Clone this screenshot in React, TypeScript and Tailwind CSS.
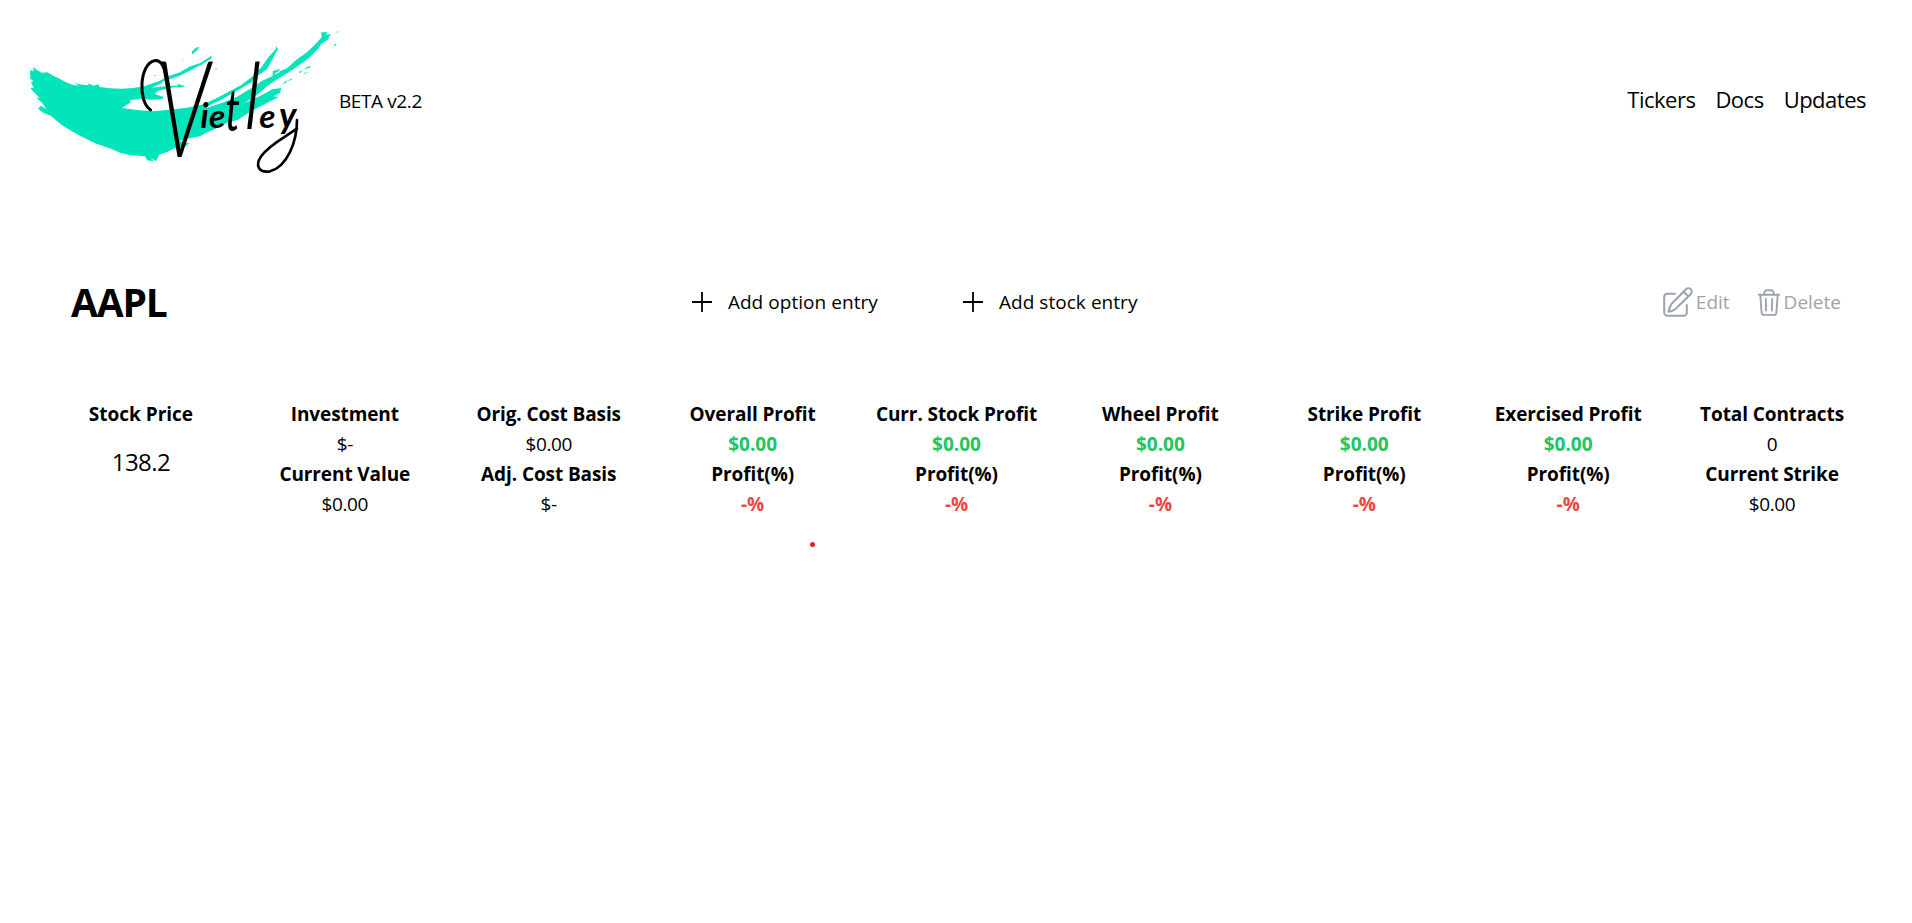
import React from "react";

type Tone = "label" | "value" | "gain" | "loss";
type Line = { text: string; tone: Tone };

const toneClass: Record<Tone, string> = {
  label: "font-bold text-black tracking-[-0.1px]",
  value: "font-normal text-black tracking-[-0.4px]",
  gain: "font-bold text-[#22c55e]",
  loss: "font-bold text-[#ef4444]",
};

const profit = (title: string): Line[] => [
  { text: title, tone: "label" },
  { text: "$0.00", tone: "gain" },
  { text: "Profit(%)", tone: "label" },
  { text: "-%", tone: "loss" },
];

const columns: Line[][] = [
  [
    { text: "Investment", tone: "label" },
    { text: "$-", tone: "value" },
    { text: "Current Value", tone: "label" },
    { text: "$0.00", tone: "value" },
  ],
  [
    { text: "Orig. Cost Basis", tone: "label" },
    { text: "$0.00", tone: "value" },
    { text: "Adj. Cost Basis", tone: "label" },
    { text: "$-", tone: "value" },
  ],
  profit("Overall Profit"),
  profit("Curr. Stock Profit"),
  profit("Wheel Profit"),
  profit("Strike Profit"),
  profit("Exercised Profit"),
  [
    { text: "Total Contracts", tone: "label" },
    { text: "0", tone: "value" },
    { text: "Current Strike", tone: "label" },
    { text: "$0.00", tone: "value" },
  ],
];

function Logo() {
  return (
    <svg className="h-40 w-[319px] shrink-0 overflow-visible" viewBox="0 0 957 480" role="img" aria-label="Vietley">
      <g fill="#02e5bb">
        <path d="M30 150 L42 154 L38 141 L64 158 L82 157 L101 168 L116 175 L132 184 L157 194 L177 197 L163 189 L187 194 L207 196 L202 189 L222 197 L234 193 L240 201 L270 205 L305 206 L340 204 L375 198 L398 190 L430 181 L425 190 L395 203 L447 197 L474 197 L470 191 L495 198 L486 202 L459 202 L440 207 L415 212 L404 221 L430 231 L428 237 L395 239 L359 236 L329 241 L334 246 L306 264 L345 269 L395 274 L450 269 L500 263 L546 254 L585 237 L630 213 L665 194 L700 167 L724 142 L745 112 L767 88 L768 78 L774 88 L757 118 L741 148 L715 166 L702 182 L650 213 L603 240 L565 257 L560 264 L605 249 L650 231 L700 201 L724 184 L758 168 L758 154 L781 146 L774 156 L802 144 L827 121 L859 98 L883 76 L905 52 L904 37 L923 37 L917 44 L932 42 L923 59 L904 72 L893 88 L868 113 L834 138 L803 159 L769 179 L742 198 L713 223 L672 250 L720 228 L757 208 L784 204 L780 219 L760 229 L776 231 L742 248 L707 266 L674 286 L655 299 L620 309 L587 326 L555 340 L540 349 L508 355 L479 363 L492 368 L510 370 L490 382 L463 385 L441 396 L418 404 L408 423 L391 414 L402 424 L381 421 L375 409 L329 405 L302 399 L269 385 L225 370 L174 344 L126 316 L92 287 L71 279 L54 266 L62 257 L78 267 L70 253 L48 232 L60 235 L40 215 L31 203 L42 205 L33 187 L40 182 L31 177 Z" />
        <path d="M405 190 L448 167 L477 158 L511 139 L541 129 L577 106 L573 116 L544 134 L512 151 L478 168 L443 180Z" />
        <path d="M515 96 L526 84 L539 80 L532 90 L517 103Z" />
        <path d="M487 121l5 1-4 2zM402 164l6 2-4 3zM586 145l6 1-5 4zM951 33l4 3-5 3zM940 75l10-5-4 8z" />
        <path d="M787 192l16-13-6 11zM801 184l17-11-5 7zM835 156l13-5-7 8zM854 145l18-8-2 6-14 4zM851 160l15-5-12 7z" />
      </g>
      <path d="M763 162l12-8 6 1-13 8z" fill="#fff" />
      <g fill="none" stroke="#000" strokeLinecap="round">
        <path d="M392 270C352 245 359 130 403 122C421 119 432 136 438 165" strokeWidth="9" />
        <path d="M831 300C831 365 802 440 750 454C716 460 704 436 724 408C752 370 800 350 831 325" strokeWidth="8" />
      </g>
      <g fill="#000" fontFamily="Lato, 'Open Sans', sans-serif" fontStyle="italic">
        <text transform="translate(408 412) scale(.66 1)" fontSize="402" fontWeight="300">V</text>
        <text transform="translate(541 324)" fontSize="104" fontWeight="700">i</text>
        <text transform="translate(567 323)" fontSize="100" fontWeight="700">e</text>
        <text transform="translate(616 332) scale(.72 1)" fontSize="172" fontWeight="400">t</text>
        <text transform="translate(669 328)" fontSize="278" fontWeight="300">l</text>
        <text transform="translate(718 323)" fontSize="100" fontWeight="700">e</text>
        <text transform="translate(777 323)" fontSize="106" fontWeight="700">y</text>
      </g>
    </svg>
  );
}

function Plus() {
  return (
    <svg className="size-5 shrink-0" viewBox="0 0 20 20" stroke="#000" strokeWidth="1.8">
      <path d="M10 0v20M0 10h20" />
    </svg>
  );
}

function EditIcon() {
  return (
    <svg className="size-[30px] shrink-0" viewBox="0 0 30 30" fill="none" stroke="currentColor" strokeWidth="2" strokeLinecap="round" strokeLinejoin="round">
      <path d="M12 6.800H4.500A3.300 3.300 0 0 0 1.200 10v15.500A3.300 3.300 0 0 0 4.500 28.800H20.500A3.300 3.300 0 0 0 23.800 25.500V18" />
      <path d="M23 2.200a3.100 3.100 0 0 1 4.800 4.800L12.700 21.700Q10 24 5.600 24.800Q6.500 19.500 8.700 16.700Z M20.700 4.800l4.500 4.500" />
    </svg>
  );
}

function TrashIcon() {
  return (
    <svg className="h-[27px] w-[22px] shrink-0" viewBox="0 0 22 27" fill="none" stroke="currentColor" strokeWidth="1.9" strokeLinecap="round" strokeLinejoin="round">
      <path d="M.9 5.700h20.200M2.300 5.700l1.300 18a2.200 2.200 0 0 0 2.200 2.200h10.400a2.200 2.200 0 0 0 2.200-2.200l1.300-18M6.300 5.500V4a2.700 2.700 0 0 1 2.700-2.700h4A2.700 2.700 0 0 1 15.700 4v1.500M7.800 10l.3 11.500M14.200 10l-.3 11.500" />
    </svg>
  );
}

export default function App() {
  return (
    <div className="min-h-screen bg-white font-['Open_Sans','Noto_Sans',sans-serif] text-[20px] leading-[30px] text-black">
      <header className="flex h-[200px] items-center justify-between pr-[46px] pl-5">
        <div className="flex items-center">
          <Logo />
          <span className="pt-0.5 text-[19px] tracking-[-0.4px]">BETA v2.2</span>
        </div>
        <nav className="flex gap-5 pb-0.5 text-[22px] tracking-[-0.5px]">
          <a>Tickers</a>
          <a>Docs</a>
          <a>Updates</a>
        </nav>
      </header>

      <section className="mt-[72px] flex h-[60px] items-center justify-between pr-[71px] pl-[71px]">
        <h1 className="text-[39px] font-bold tracking-[-1.2px]">AAPL</h1>
        <div className="flex justify-center gap-[85px] text-[19px] tracking-[0.05px]">
          <button className="flex items-center gap-4"><Plus />Add option entry</button>
          <button className="flex items-center gap-4"><Plus />Add stock entry</button>
        </div>
        <div className="flex justify-end gap-7 text-[19px] text-[#9ca3af]">
          <button className="flex items-center gap-[3px]"><EditIcon />Edit</button>
          <button className="flex items-center gap-1"><TrashIcon />Delete</button>
        </div>
      </section>

      <section className="mt-[67px] grid grid-cols-9 pr-[38px] pl-[39px] text-center text-[19px]">
        <div className="flex flex-col">
          <span className="font-bold">Stock Price</span>
          <span className="mt-[18px] text-[24px] tracking-[-0.6px]">138.2</span>
        </div>
        {columns.map((lines, i) => (
          <div key={i} className="flex flex-col">
            {lines.map((line, j) => (
              <span key={j} className={toneClass[line.tone]}>{line.text}</span>
            ))}
          </div>
        ))}
      </section>
      <div className="mt-[23px] ml-[810px] size-[5px] rounded-full bg-[#ec1c24]" />
    </div>
  );
}
